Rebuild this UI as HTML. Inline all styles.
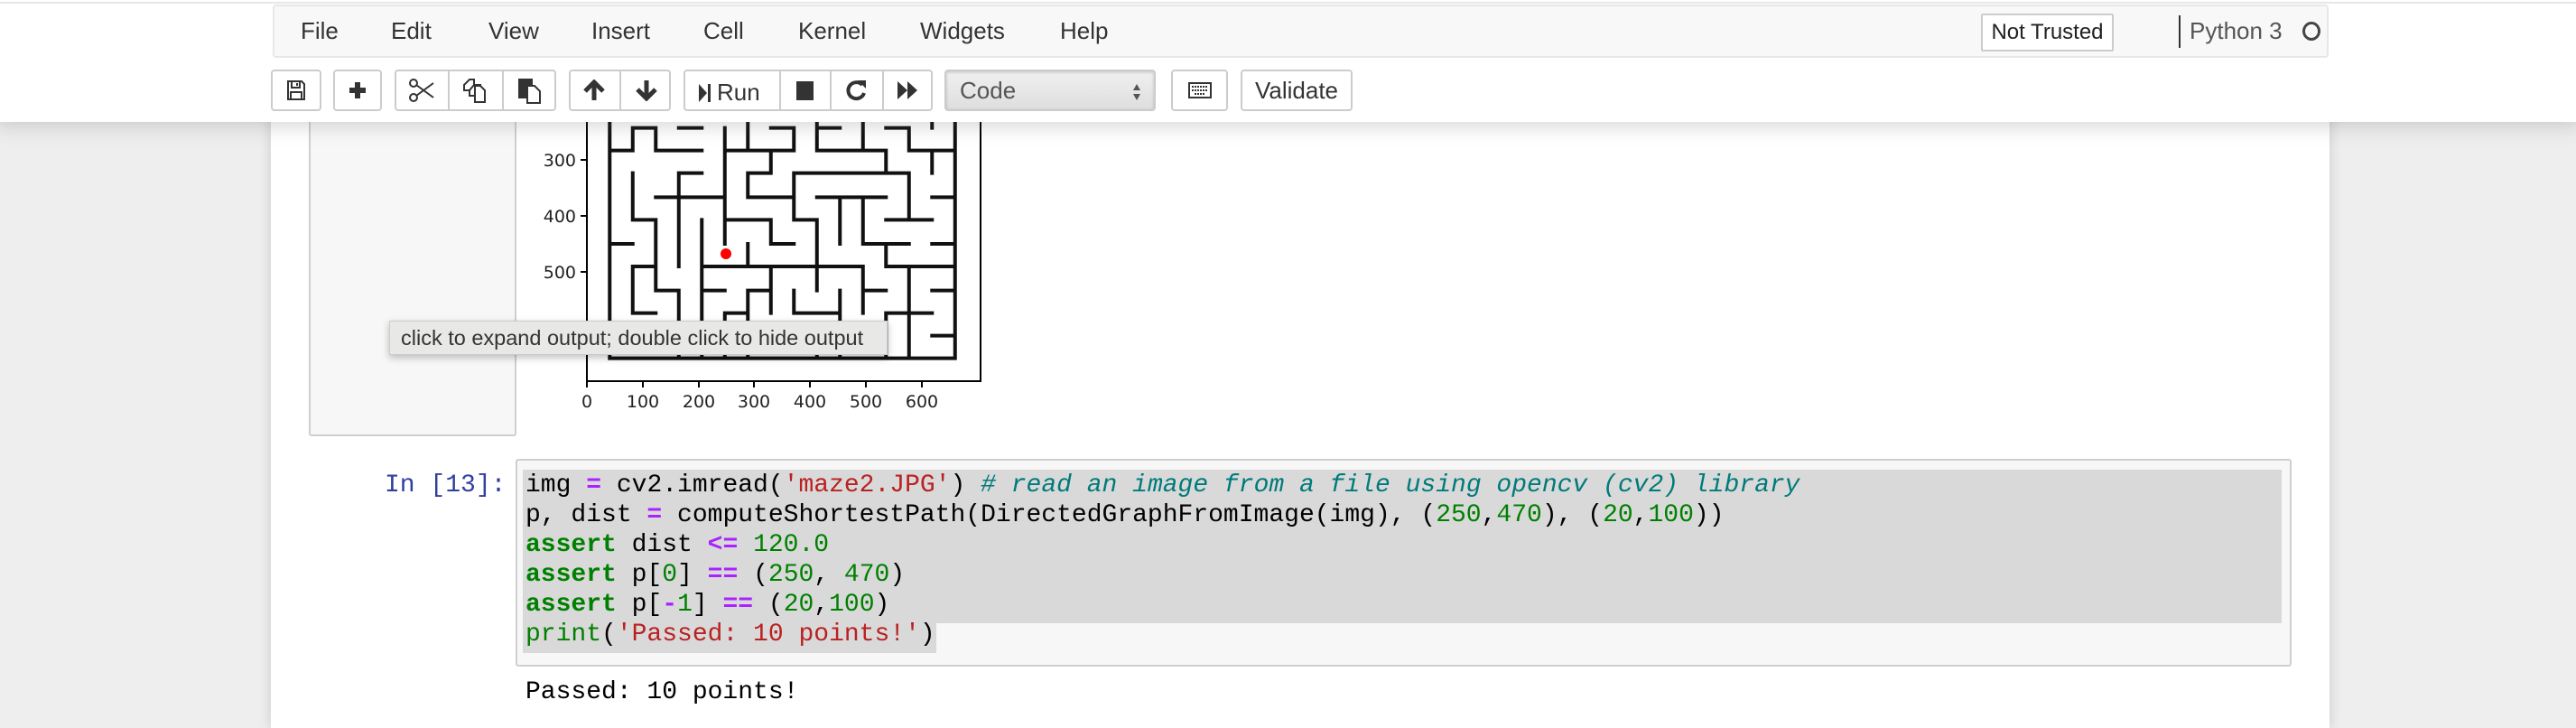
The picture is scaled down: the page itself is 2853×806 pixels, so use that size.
<!DOCTYPE html>
<html><head><meta charset="utf-8"><style>
*{box-sizing:border-box;margin:0;padding:0}
body{width:2853px;height:806px;overflow:hidden;background:#eee;position:relative;font-family:"Liberation Sans",sans-serif;color:#333}
.abs{position:absolute}
#nb{left:300px;top:0;width:2280px;height:806px;background:#fff;box-shadow:0 0 12px 1px rgba(87,87,87,.2)}
#hdr{left:0;top:0;width:2853px;height:135px;background:#fff;box-shadow:0 0 20px 4px rgba(87,87,87,.25);z-index:5}
#menubar{left:302px;top:5px;width:2277px;height:59px;background:#f8f8f8;border:2px solid #e7e7e7;border-radius:4px}
.m{position:absolute;top:12px;font-size:26px;color:#333}
.btn{position:absolute;top:77px;height:46px;border:2px solid #ccc;border-radius:4px;background:#fff;display:flex;align-items:center;justify-content:center;font-size:26px;color:#333}
.sep{position:absolute;top:77px;width:2px;height:46px;background:#ccc}
.code{font-family:"Liberation Mono",monospace;font-size:28px;white-space:pre;line-height:33px}
.k{color:#008000;font-weight:bold}.o{color:#aa22ff;font-weight:bold}.s{color:#ba2121}.c{color:#007a7a;font-style:italic}.n{color:#008000}
</style></head><body>
<div id="nb" class="abs"></div>
<div class="abs" style="left:342px;top:100px;width:230px;height:383px;background:#f7f7f7;border:2px solid #cfcfcf;border-top:none;border-radius:0 0 3px 3px"></div>
<svg class="abs" style="left:0;top:0" width="1200" height="480">
<g stroke="#000" stroke-width="2" fill="none">
<line x1="650" y1="120" x2="650" y2="423"/><line x1="649" y1="422" x2="1087" y2="422"/><line x1="1086" y1="120" x2="1086" y2="423"/>
<line x1="643" y1="177" x2="650" y2="177"/><line x1="643" y1="239" x2="650" y2="239"/><line x1="643" y1="301" x2="650" y2="301"/>
<line x1="650" y1="422" x2="650" y2="429"/><line x1="712" y1="422" x2="712" y2="429"/><line x1="774" y1="422" x2="774" y2="429"/><line x1="835" y1="422" x2="835" y2="429"/><line x1="897" y1="422" x2="897" y2="429"/><line x1="959" y1="422" x2="959" y2="429"/><line x1="1021" y1="422" x2="1021" y2="429"/>
</g>
<g font-family="DejaVu Sans,sans-serif" font-size="19" fill="#222" text-anchor="end">
<text x="638" y="184">300</text><text x="638" y="246">400</text><text x="638" y="308">500</text></g>
<g font-family="DejaVu Sans,sans-serif" font-size="19" fill="#222" text-anchor="middle">
<text x="650" y="451">0</text><text x="712" y="451">100</text><text x="774" y="451">200</text><text x="835" y="451">300</text><text x="897" y="451">400</text><text x="959" y="451">500</text><text x="1021" y="451">600</text></g>
<g transform="translate(330,130) scale(0.51,0.3333)" stroke="#111" fill="none" stroke-linecap="square">
<path vector-effect="non-scaling-stroke" stroke-width="4" d="M677 -60V800H1427V-60
M727 35H777M827 35H877M1027 35H1077M1127 35H1177M1277 35H1327
M677 110H727M777 110H877M927 110H1077M1127 110H1277M1327 110H1427
M827 185H877M977 185H1027M1077 185H1327
M777 265H927M977 265H1077M1127 265H1277M1377 265H1427
M727 340H777M927 340H1027M1077 340H1127M1277 340H1377
M677 420H727M1027 420H1077M1227 420H1327M1377 420H1427
M727 495H777M877 495H1227M1277 495H1427
M777 575H827M877 575H927M977 575H1027M1227 575H1277M1377 575H1427
M727 650H777M927 650H977M1077 650H1177M1277 650H1377
M1377 725H1427
M727 35V110M727 185V340M727 495V650
M777 35V110M777 340V575
M827 185V495M827 575V800
M877 340V800
M927 35V420M927 650V800
M977 -60V110M977 185V265M977 420V495M977 575V800
M1027 110V185M1027 340V420M1027 495V650
M1077 35V110M1077 185V340M1077 575V650
M1127 -60V110M1127 340V575M1127 725V800
M1177 265V420M1177 575V800
M1227 -60V110M1227 265V420M1227 495V650
M1277 110V185M1277 420V495M1277 650V800
M1327 35V110M1327 185V340M1327 495V800
M1377 -60V35M1377 110V185"/>
</g>
<circle cx="804" cy="281" r="6" fill="#f00"/>
</svg>
<div class="abs" style="left:431px;top:355px;width:552px;height:38px;background:#e8e8e6;border:1px solid #ccc;box-shadow:0 3px 8px rgba(0,0,0,.25);font-size:23.5px;color:#333;line-height:36px;padding-left:12px;white-space:nowrap">click to expand output; double click to hide output</div>
<div class="abs code" style="left:426px;top:521px;color:#303f9f">In [13]:</div>
<div class="abs" style="left:571px;top:508px;width:1967px;height:230px;background:#f7f7f7;border:2px solid #cfcfcf;border-radius:3px"></div>
<div class="abs" style="left:579px;top:520px;width:1948px;height:170px;background:#d9d9d9"></div>
<div class="abs" style="left:579px;top:690px;width:458px;height:33px;background:#d9d9d9"></div>
<div class="abs code" style="left:582px;top:521px;color:#000">img <span class="o">=</span> cv2.imread(<span class="s">'maze2.JPG'</span>) <span class="c"># read an image from a file using opencv (cv2) library</span>
p, dist <span class="o">=</span> computeShortestPath(DirectedGraphFromImage(img), (<span class="n">250</span>,<span class="n">470</span>), (<span class="n">20</span>,<span class="n">100</span>))
<span class="k">assert</span> dist <span class="o">&lt;=</span> <span class="n">120.0</span>
<span class="k">assert</span> p[<span class="n">0</span>] <span class="o">==</span> (<span class="n">250</span>, <span class="n">470</span>)
<span class="k">assert</span> p[<span class="o">-</span><span class="n">1</span>] <span class="o">==</span> (<span class="n">20</span>,<span class="n">100</span>)
<span class="n">print</span>(<span class="s">'Passed: 10 points!'</span>)</div>
<div class="abs code" style="left:582px;top:750px;color:#000">Passed: 10 points!</div>
<div id="hdr" class="abs">
<div class="abs" style="left:0;top:2px;width:2853px;height:2px;background:#e7e7e7"></div>
<div id="menubar" class="abs">
<span class="m" style="left:29px">File</span><span class="m" style="left:129px">Edit</span><span class="m" style="left:237px">View</span><span class="m" style="left:351px">Insert</span><span class="m" style="left:475px">Cell</span><span class="m" style="left:580px">Kernel</span><span class="m" style="left:715px">Widgets</span><span class="m" style="left:870px">Help</span>
<div class="abs" style="left:1890px;top:8px;width:147px;height:42px;background:#fff;border:2px solid #ccc;border-radius:2px;font-size:24px;color:#222;line-height:38px;text-align:center">Not Trusted</div>
<div class="abs" style="left:2109px;top:10px;width:2px;height:36px;background:#333"></div>
<span class="m" style="left:2121px;color:#555">Python 3</span>
<div class="abs" style="left:2246px;top:17px;width:20px;height:21px;border:3px solid #444;border-radius:50%"></div>
</div>
<div class="btn" style="left:300px;width:56px"><svg width="22" height="24" viewBox="0 0 22 24"><path d="M2 2H17L20 5V22H2Z M6 2V9H15V2 M12 4V7 M5 14H17V22H5Z" fill="none" stroke="#333" stroke-width="2"/></svg></div>
<div class="btn" style="left:369px;width:54px"><svg width="22" height="22"><path d="M11 2V20M2 11H20" stroke="#333" stroke-width="6"/></svg></div>
<div class="btn" style="left:437px;width:179px"></div>
<div class="sep" style="left:496px"></div><div class="sep" style="left:556px"></div>
<div class="abs" style="left:452px;top:87px"><svg width="30" height="26" viewBox="0 0 30 26"><circle cx="6" cy="5" r="4" fill="none" stroke="#333" stroke-width="2"/><circle cx="6" cy="21" r="4" fill="none" stroke="#333" stroke-width="2"/><path d="M9 7L28 21M9 19L28 5" stroke="#333" stroke-width="2"/></svg></div>
<div class="abs" style="left:512px;top:86px"><svg width="28" height="28" viewBox="0 0 28 28"><path d="M8 2H13V8H20V20H8V14H2V8Z M13 8L8 14" fill="none" stroke="#333" stroke-width="2"/><path d="M14 9H20L25 14V27H14Z" fill="#fff" stroke="#333" stroke-width="2"/></svg></div>
<div class="abs" style="left:572px;top:85px"><svg width="28" height="30" viewBox="0 0 28 30"><rect x="2" y="2" width="16" height="22" fill="#333"/><path d="M12 10H20L26 16V29H12Z" fill="#fff" stroke="#333" stroke-width="2"/></svg></div>
<div class="btn" style="left:630px;width:113px"></div><div class="sep" style="left:686px"></div>
<div class="abs" style="left:645px;top:88px"><svg width="26" height="24"><path d="M13 23V5M3 13L13 3L23 13" fill="none" stroke="#333" stroke-width="5"/></svg></div>
<div class="abs" style="left:703px;top:88px"><svg width="26" height="24"><path d="M13 1V19M3 11L13 21L23 11" fill="none" stroke="#333" stroke-width="5"/></svg></div>
<div class="btn" style="left:757px;width:276px"></div>
<div class="sep" style="left:863px"></div><div class="sep" style="left:919px"></div><div class="sep" style="left:977px"></div>
<div class="abs" style="left:774px;top:87px;font-size:26px;display:flex;align-items:center;gap:6px"><svg width="14" height="24"><path d="M0 2L9 12L0 22Z" fill="#333"/><rect x="10" y="2" width="3" height="20" fill="#333"/></svg>Run</div>
<div class="abs" style="left:882px;top:90px;width:19px;height:21px;background:#333"></div>
<div class="abs" style="left:935px;top:86px"><svg width="26" height="28" viewBox="0 0 26 28"><path d="M20 8A9 9 0 1 0 22 17" fill="none" stroke="#333" stroke-width="4"/><path d="M15 3H24V12Z" fill="#333"/></svg></div>
<div class="abs" style="left:992px;top:89px"><svg width="26" height="22"><path d="M2 1L13 11L2 21ZM13 1L24 11L13 21Z" fill="#333"/></svg></div>
<div class="btn" style="left:1046px;width:234px;justify-content:flex-start;padding-left:15px;background:linear-gradient(#f0f0f0,#dedede);box-shadow:inset 0 1px 3px rgba(0,0,0,.2);color:#555">Code<svg class="abs" style="right:14px;top:13px" width="10" height="20"><path d="M5 1L9 8H1ZM5 19L9 12H1Z" fill="#555"/></svg></div>
<div class="btn" style="left:1297px;width:63px"><svg width="26" height="18"><rect x="1" y="1" width="24" height="16" fill="none" stroke="#333" stroke-width="2"/><path d="M4 5H22M4 9H22M7 13H19" stroke="#333" stroke-width="2" stroke-dasharray="2 1"/></svg></div>
<div class="btn" style="left:1374px;width:124px">Validate</div>
</div>
</body></html>
